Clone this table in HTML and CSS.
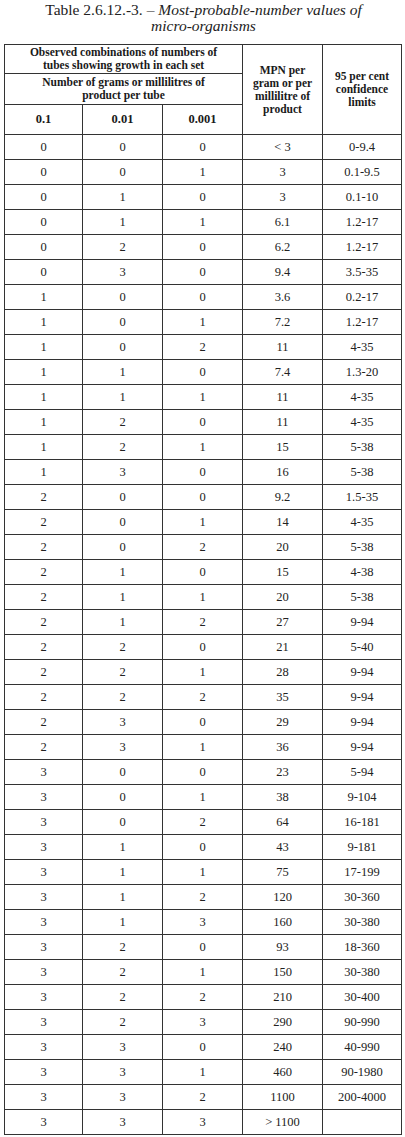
FILE: index.html
```html
<!DOCTYPE html>
<html>
<head>
<meta charset="utf-8">
<link rel="stylesheet" href="styles.css">
</head>
<body>
<div class="page">
  <h1 class="title">Table 2.6.12.-3. <span class="dash">–</span> <em>Most-probable-number values of<br>micro-organisms</em></h1>
  <table class="mpn">
    <colgroup>
      <col class="c1"><col class="c2"><col class="c3"><col class="c4"><col class="c5">
    </colgroup>
    <thead>
      <tr class="h1"><th colspan="3">Observed combinations of numbers of<br>tubes showing growth in each set</th><th rowspan="3">MPN per<br>gram or per<br>millilitre of<br>product</th><th rowspan="3">95 per cent<br>confidence<br>limits</th></tr>
      <tr class="h2"><th colspan="3">Number of grams or millilitres of<br>product per tube</th></tr>
      <tr class="h3"><th>0.1</th><th>0.01</th><th>0.001</th></tr>
    </thead>
    <tbody>
      <tr><td>0</td><td>0</td><td>0</td><td>&lt; 3</td><td>0-9.4</td></tr>
      <tr><td>0</td><td>0</td><td>1</td><td>3</td><td>0.1-9.5</td></tr>
      <tr><td>0</td><td>1</td><td>0</td><td>3</td><td>0.1-10</td></tr>
      <tr><td>0</td><td>1</td><td>1</td><td>6.1</td><td>1.2-17</td></tr>
      <tr><td>0</td><td>2</td><td>0</td><td>6.2</td><td>1.2-17</td></tr>
      <tr><td>0</td><td>3</td><td>0</td><td>9.4</td><td>3.5-35</td></tr>
      <tr><td>1</td><td>0</td><td>0</td><td>3.6</td><td>0.2-17</td></tr>
      <tr><td>1</td><td>0</td><td>1</td><td>7.2</td><td>1.2-17</td></tr>
      <tr><td>1</td><td>0</td><td>2</td><td>11</td><td>4-35</td></tr>
      <tr><td>1</td><td>1</td><td>0</td><td>7.4</td><td>1.3-20</td></tr>
      <tr><td>1</td><td>1</td><td>1</td><td>11</td><td>4-35</td></tr>
      <tr><td>1</td><td>2</td><td>0</td><td>11</td><td>4-35</td></tr>
      <tr><td>1</td><td>2</td><td>1</td><td>15</td><td>5-38</td></tr>
      <tr><td>1</td><td>3</td><td>0</td><td>16</td><td>5-38</td></tr>
      <tr><td>2</td><td>0</td><td>0</td><td>9.2</td><td>1.5-35</td></tr>
      <tr><td>2</td><td>0</td><td>1</td><td>14</td><td>4-35</td></tr>
      <tr><td>2</td><td>0</td><td>2</td><td>20</td><td>5-38</td></tr>
      <tr><td>2</td><td>1</td><td>0</td><td>15</td><td>4-38</td></tr>
      <tr><td>2</td><td>1</td><td>1</td><td>20</td><td>5-38</td></tr>
      <tr><td>2</td><td>1</td><td>2</td><td>27</td><td>9-94</td></tr>
      <tr><td>2</td><td>2</td><td>0</td><td>21</td><td>5-40</td></tr>
      <tr><td>2</td><td>2</td><td>1</td><td>28</td><td>9-94</td></tr>
      <tr><td>2</td><td>2</td><td>2</td><td>35</td><td>9-94</td></tr>
      <tr><td>2</td><td>3</td><td>0</td><td>29</td><td>9-94</td></tr>
      <tr><td>2</td><td>3</td><td>1</td><td>36</td><td>9-94</td></tr>
      <tr><td>3</td><td>0</td><td>0</td><td>23</td><td>5-94</td></tr>
      <tr><td>3</td><td>0</td><td>1</td><td>38</td><td>9-104</td></tr>
      <tr><td>3</td><td>0</td><td>2</td><td>64</td><td>16-181</td></tr>
      <tr><td>3</td><td>1</td><td>0</td><td>43</td><td>9-181</td></tr>
      <tr><td>3</td><td>1</td><td>1</td><td>75</td><td>17-199</td></tr>
      <tr><td>3</td><td>1</td><td>2</td><td>120</td><td>30-360</td></tr>
      <tr><td>3</td><td>1</td><td>3</td><td>160</td><td>30-380</td></tr>
      <tr><td>3</td><td>2</td><td>0</td><td>93</td><td>18-360</td></tr>
      <tr><td>3</td><td>2</td><td>1</td><td>150</td><td>30-380</td></tr>
      <tr><td>3</td><td>2</td><td>2</td><td>210</td><td>30-400</td></tr>
      <tr><td>3</td><td>2</td><td>3</td><td>290</td><td>90-990</td></tr>
      <tr><td>3</td><td>3</td><td>0</td><td>240</td><td>40-990</td></tr>
      <tr><td>3</td><td>3</td><td>1</td><td>460</td><td>90-1980</td></tr>
      <tr><td>3</td><td>3</td><td>2</td><td>1100</td><td>200-4000</td></tr>
      <tr><td>3</td><td>3</td><td>3</td><td>&gt; 1100</td><td></td></tr>
    </tbody>
  </table>
</div>
</body>
</html>
```
FILE: styles.css
```css
html, body {
  margin: 0;
  padding: 0;
  background: #ffffff;
}
.page {
  width: 405px;
  padding-top: 2px;
  color: #111;
  font-family: "Liberation Serif", "DejaVu Serif", serif;
}
.title {
  margin: 0;
  font-size: 15.5px;
  font-weight: normal;
  line-height: 16px;
  text-align: center;
  padding-left: 2px;
  color: #222;
}
.title em {
  font-style: italic;
}
.mpn {
  margin: 10px 0 0 4px;
  width: 397px;
  border-collapse: collapse;
  table-layout: fixed;
  border: 1.5px solid #1a1a1a;
}
.c1 { width: 78px; }
.c2 { width: 80px; }
.c3 { width: 80px; }
.c4 { width: 80px; }
.c5 { width: 79px; }
.mpn th, .mpn td {
  border: 1px solid #333;
  text-align: center;
  vertical-align: middle;
  padding: 0;
}
.mpn th {
  font-weight: bold;
  font-size: 11.5px;
  line-height: 13px;
  color: #1a1a1a;
}
.mpn .h1 { height: 29px; }
.mpn .h2 { height: 31px; }
.mpn .h3 { height: 30px; }
.mpn .h3 th { font-size: 12.5px; }
.mpn td {
  font-size: 12.5px;
  height: 24px;
  color: #222;
}
```
